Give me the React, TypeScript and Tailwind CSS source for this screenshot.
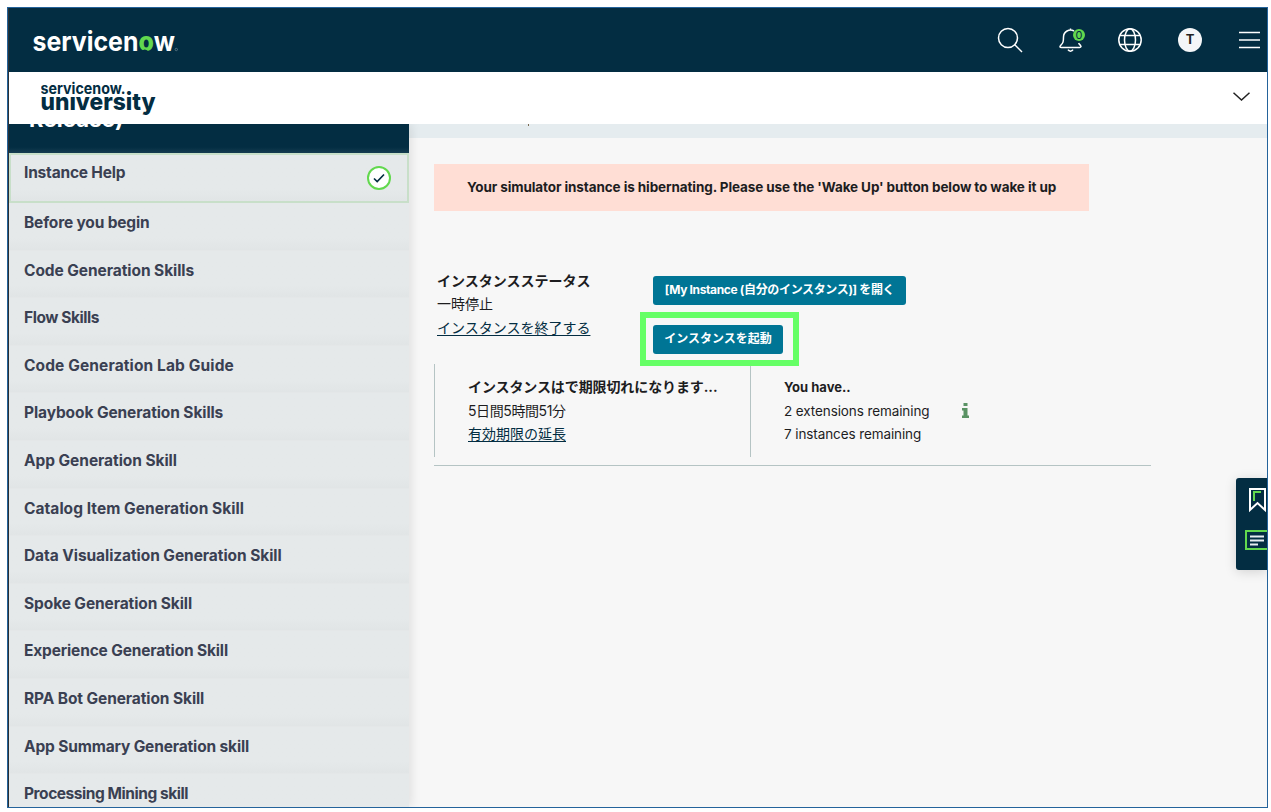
import { useState } from "react";
import clsx from "clsx";

type Skill = { title: string; tracking: string; done?: boolean };

const SKILLS: Skill[] = [
  { title: "Instance Help", tracking: "tracking-[-0.2px]", done: true },
  { title: "Before you begin", tracking: "tracking-[-0.17px]" },
  { title: "Code Generation Skills", tracking: "tracking-[-0.07px]" },
  { title: "Flow Skills", tracking: "tracking-[-0.45px]" },
  { title: "Code Generation Lab Guide", tracking: "tracking-[0.12px]" },
  { title: "Playbook Generation Skills", tracking: "tracking-[-0.1px]" },
  { title: "App Generation Skill", tracking: "tracking-[-0.06px]" },
  { title: "Catalog Item Generation Skill", tracking: "tracking-[0.04px]" },
  { title: "Data Visualization Generation Skill", tracking: "tracking-[-0.07px]" },
  { title: "Spoke Generation Skill", tracking: "tracking-[-0.1px]" },
  { title: "Experience Generation Skill", tracking: "tracking-[-0.16px]" },
  { title: "RPA Bot Generation Skill", tracking: "tracking-[-0.1px]" },
  { title: "App Summary Generation skill", tracking: "tracking-[-0.15px]" },
  { title: "Processing Mining skill", tracking: "tracking-[-0.45px]" },
];

export default function App() {
  const [active, setActive] = useState(0);

  return (
    <div className="h-[812px] w-[1271px] overflow-hidden bg-white pl-[7px] pt-[7px] font-['Inter','Noto_Sans_CJK_JP',sans-serif] text-[#1d1d1f]">
      <div className="relative flex h-[801px] w-[1261px] flex-col overflow-hidden border border-[#24639b] bg-[#f7f7f7]">
        <div className="flex min-h-0 flex-1 flex-col border-l border-[#2b3238]">
          <TopBar />
          <SubBar />
          <div className="flex min-h-0 flex-1">
            {/* ---------- Sidebar ---------- */}
            <aside className="z-10 w-[400px] shrink-0 overflow-hidden bg-[#e4e8e9] shadow-[2px_0_10px_rgba(0,0,0,0.1)]">
              <div className="h-[29px] overflow-hidden bg-gradient-to-b from-[#032d42] from-80% to-[#153c50] pl-5">
                <p className="-mt-[17px] text-[22px] font-bold leading-6 tracking-[0.2px] text-white">Release)</p>
              </div>
              {SKILLS.map((s, i) => (
                <button
                  key={s.title}
                  type="button"
                  onClick={() => setActive(i)}
                  className={clsx(
                    "flex w-full items-start justify-between bg-gradient-to-b from-[#e5e9ea] from-75% to-[#e1e5e6] text-left",
                    i === active
                      ? "h-[50px] border-2 border-[#c8dfc9] pl-[13px] pr-4 pt-[7px]"
                      : "h-[47.6px] border-b border-[#e4e7e8] pl-[15px] pt-[9px]"
                  )}
                >
                  <span className={clsx("pt-px text-[15.5px] font-bold leading-5 text-[#3a4052]", s.tracking)}>{s.title}</span>
                  {s.done && <DoneBadge />}
                </button>
              ))}
            </aside>

            {/* ---------- Content ---------- */}
            <main className="min-w-0 flex-1">
              <div className="h-[14px] overflow-hidden bg-[#e5ecef] pl-[119px]">
                <div className="h-0.5 w-px bg-[#7b6a52]" />
              </div>
              <div className="ml-[25px] mt-[26px] flex h-[47px] w-[655px] items-center bg-[#ffded5] pl-[33px] text-[13.5px] font-bold">
                <span className="whitespace-nowrap tracking-[-0.1px]">
                  Your simulator instance is hibernating. Please use the 'Wake Up' button below to wake it up
                </span>
              </div>
              <InstancePanel />
            </main>
          </div>
        </div>
        <SideTools />
      </div>
    </div>
  );
}

function InstancePanel() {
  return (
    <section className="ml-[25px] mt-[53px] w-[717px] border-b border-[#b5c4c4] pb-2 text-sm leading-[23.5px]">
      <div className="flex h-[100px] pl-[3px] pt-1">
        <div className="w-[203px] pt-px">
          <p className="font-bold leading-[23px]">インスタンスステータス</p>
          <p>一時停止</p>
          <a className="text-[#032d42] underline underline-offset-2">インスタンスを終了する</a>
        </div>
        <div className="pt-0.5">
          <button
            type="button"
            className="ml-[13px] mt-1.5 flex h-[29px] w-[253px] items-center justify-center whitespace-nowrap rounded-[3px] bg-[#007595] pb-0.5 text-xs font-bold tracking-[-0.35px] text-white"
          >
            [My Instance (自分のインスタンス)] を開く
          </button>
          <div className="relative z-10 mt-[7px] flex h-[54px] w-[159px] items-center border-[6px] border-[#66ff66] bg-[#f7f7f7] pl-[7px]">
            <button
              type="button"
              className="flex h-[29px] w-[130px] items-center justify-center rounded-[3px] bg-[#007595] text-xs font-bold text-white"
            >
              インスタンスを起動
            </button>
          </div>
        </div>
      </div>
      <div className="flex h-[93px]">
        <div className="w-[316px] border-l border-[#b5c4c4] pl-[33px] pt-[11px]">
          <p className="font-bold tracking-[-0.1px]">インスタンスはで期限切れになります...</p>
          <p className="tracking-[-0.4px]">5日間5時間51分</p>
          <a className="text-[#032d42] underline underline-offset-2">有効期限の延長</a>
        </div>
        <div className="flex border-l border-[#b5c4c4] pl-[33px] pt-3 text-[13.5px]">
          <div className="w-[178px]">
            <p className="text-[13px] font-bold">You have..</p>
            <p className="tracking-[-0.1px]">2 extensions remaining</p>
            <p className="tracking-[-0.1px]">7 instances remaining</p>
          </div>
          <svg className="mt-[27px] h-[15px] w-[7px]" viewBox="0 0 7 15" fill="#5a9264">
            <path d="M1.5 0h4v3h-4zM0 5h5.500v7.500H7V15H0v-2.500h1.500v-5H0z" />
          </svg>
        </div>
      </div>
    </section>
  );
}

function TopBar() {
  return (
    <header className="flex h-16 shrink-0 items-center justify-between bg-[#032d42] pl-[23px] pr-[7px]">
      <svg className="h-10 w-[147px]" viewBox="0 0 147 40" fontWeight="700" fontSize="26.500" fill="#fff">
        <text x=".5" y="30.500" textLength="142.500" lengthAdjust="spacingAndGlyphs">
          servicen<tspan fill="#62d84e" fontWeight="800">o</tspan>w
        </text>
        <path d="M109 32a4 4 0 0 1 7.500 0z" fill="#032d42" />
        <circle cx="144.300" cy="29.500" r="1.200" fill="none" stroke="#8fa3ad" strokeWidth=".5" />
      </svg>
      <div className="flex items-center text-white">
        <svg className="mr-9 size-[26px]" viewBox="0 0 26 26" fill="none" stroke="currentColor" strokeWidth="1.500">
          <circle cx="11" cy="11" r="9.500" />
          <path d="m17.500 17.500 7.500 7.500" />
        </svg>
        <div className="relative mr-[35px] size-6">
          <svg className="size-6" viewBox="0 0 24 24" fill="none" stroke="currentColor" strokeWidth="1.500">
            <path d="M11.500 .5v1.500M15 3A7 7 0 0 0 4.500 9c0 5-.5 6-2.500 8-1.800 2-1 2.500.5 2.500h18c1.500 0 2-1 .8-2.300-.8-.9-1.300-1.200-1.600-2.200M9 21.700c1 1.900 4 1.900 5 0" />
          </svg>
          <span className="absolute left-[14px] top-px flex size-3 items-center justify-center rounded-full bg-[#62d84e] text-[11px] leading-none text-[#032d42]">
            0
          </span>
        </div>
        <svg className="mr-9 size-6" viewBox="0 0 24 24" fill="none" stroke="currentColor" strokeWidth="1.500">
          <circle cx="12" cy="12" r="11.200" />
          <ellipse cx="12" cy="12" rx="5.500" ry="11.200" />
          <path d="M2 7.500h20M2 16.500h20" />
        </svg>
        <span className="mr-[37px] flex size-6 items-center justify-center rounded-full bg-[#f4f6f8] text-[13px] font-bold text-[#222]">
          T
        </span>
        <svg className="h-[18px] w-[21px]" viewBox="0 0 21 18" stroke="currentColor" strokeWidth="1.500">
          <path d="M0 1.500h21M0 9h21M0 16.500h21" />
        </svg>
      </div>
    </header>
  );
}

function SubBar() {
  return (
    <div className="z-20 flex h-[52px] shrink-0 items-center justify-between bg-white pl-8 pr-[17px]">
      <svg className="h-[42px] w-[118px]" viewBox="0 0 118 42" fill="#032d42">
        <text x="-.5" y="32.500" fontSize="24" fontWeight="800" textLength="115" lengthAdjust="spacingAndGlyphs">
          university
        </text>
        {/* hides the first i's dot so the wordmarks can stack tightly */}
        <path d="M0 0h84v18.500H0z" fill="#fff" />
        <text x="-.5" y="17" fontSize="15" fontWeight="700" textLength="85" lengthAdjust="spacingAndGlyphs">
          servicenow.
        </text>
      </svg>
      <svg className="h-[9px] w-[17px] -translate-y-[2px]" viewBox="0 0 17 9" fill="none" stroke="#222" strokeWidth="1.500">
        <path d="m.5.700 8 7.300 8-7.300" />
      </svg>
    </div>
  );
}

function DoneBadge() {
  return (
    <svg className="mt-1 size-6" viewBox="0 0 24 24" fill="none">
      <circle cx="12" cy="12" r="11" fill="#fff" stroke="#62d84e" strokeWidth="2" />
      <path d="m7 12.500 3.200 3L17 8.500" stroke="#032d42" strokeWidth="1.700" />
    </svg>
  );
}

/* Bookmark / notes tab pinned to the right edge. */
function SideTools() {
  return (
    <div className="absolute right-0 top-[470px] h-[92px] w-[31px] overflow-hidden rounded-l-[3px] bg-[#032d42] shadow-[0_2px_12px_rgba(0,0,0,0.15)]">
      <svg className="h-[92px] w-[31px]" viewBox="0 0 31 92" fill="none" strokeWidth="2">
        <path d="M14 11h15v21l-7.500-7L14 32z" stroke="#fff" />
        <path d="M18 23v-9h7" stroke="#62d84e" />
        <path d="M32 53H10v18h22" stroke="#62d84e" />
        <path d="M14 58.500h14M14 62.500h14M14 66.500h8" stroke="#e8eef1" strokeWidth="1.800" />
      </svg>
    </div>
  );
}
